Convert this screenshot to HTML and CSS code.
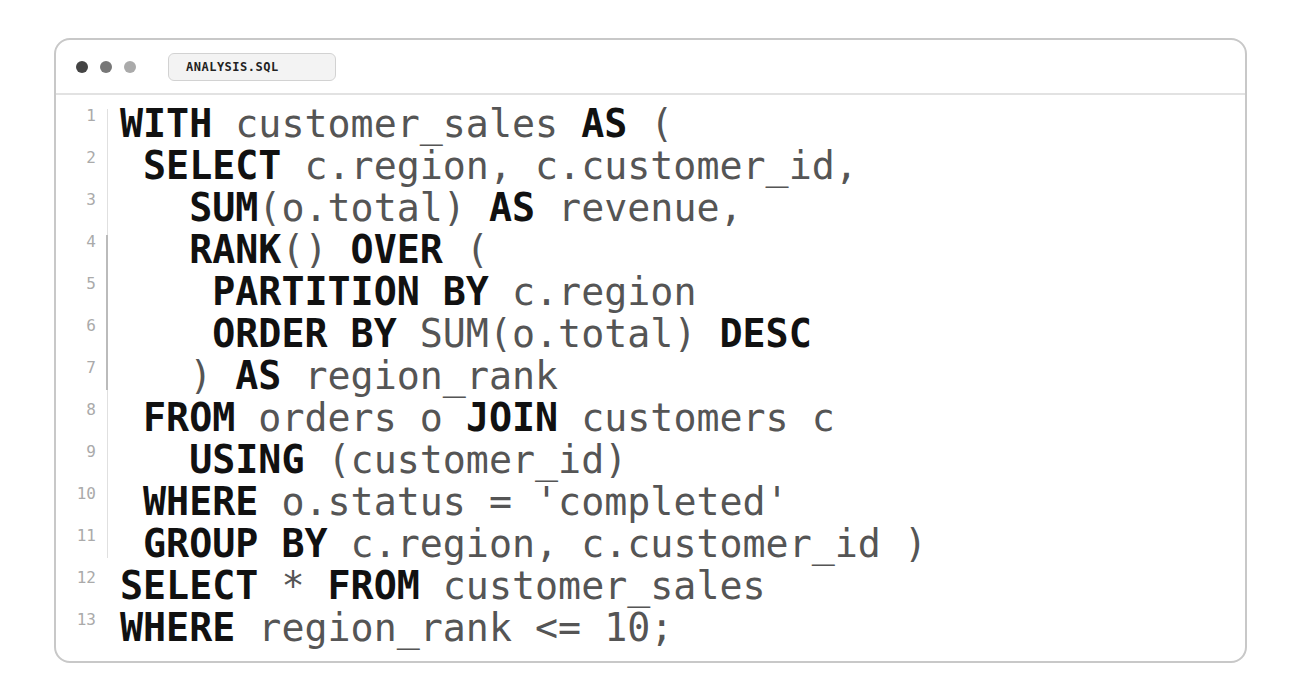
FILE: index.html
```html
<!DOCTYPE html>
<html>
<head>
<meta charset="utf-8">
<link rel="stylesheet" href="styles.css">
</head>
<body>
<div class="window">
  <div class="titlebar">
    <span class="dot d1"></span><span class="dot d2"></span><span class="dot d3"></span>
    <div class="tab">ANALYSIS.SQL</div>
  </div>
  <div class="code">
    <div class="scope">
      <div class="line"><span class="num">1</span><span class="src"><b>WITH</b> customer_sales <b>AS</b> (</span></div>
      <div class="line"><span class="num">2</span><span class="src"> <b>SELECT</b> c.region, c.customer_id,</span></div>
      <div class="line"><span class="num">3</span><span class="src">   <b>SUM</b>(o.total) <b>AS</b> revenue,</span></div>
      <div class="scope inner">
        <div class="line"><span class="num">4</span><span class="src">   <b>RANK</b>() <b>OVER</b> (</span></div>
        <div class="line"><span class="num">5</span><span class="src">    <b>PARTITION BY</b> c.region</span></div>
        <div class="line"><span class="num">6</span><span class="src">    <b>ORDER BY</b> SUM(o.total) <b>DESC</b></span></div>
        <div class="line"><span class="num">7</span><span class="src">   ) <b>AS</b> region_rank</span></div>
      </div>
      <div class="line"><span class="num">8</span><span class="src"> <b>FROM</b> orders o <b>JOIN</b> customers c</span></div>
      <div class="line"><span class="num">9</span><span class="src">   <b>USING</b> (customer_id)</span></div>
      <div class="line"><span class="num">10</span><span class="src"> <b>WHERE</b> o.status = 'completed'</span></div>
      <div class="line"><span class="num">11</span><span class="src"> <b>GROUP BY</b> c.region, c.customer_id )</span></div>
    </div>
    <div class="line"><span class="num">12</span><span class="src"><b>SELECT</b> * <b>FROM</b> customer_sales</span></div>
    <div class="line"><span class="num">13</span><span class="src"><b>WHERE</b> region_rank &lt;= 10;</span></div>
  </div>
</div>
</body>
</html>
```
FILE: styles.css
```css
html, body {
  margin: 0;
  padding: 0;
  background: #ffffff;
}
body {
  padding-top: 38px;
  font-family: "DejaVu Sans Mono", monospace;
}
.window {
  margin-left: 54px;
  width: 1189px;
  height: 621px;
  border: 2px solid #c8c8c8;
  border-radius: 16px;
  background: #fff;
  overflow: hidden;
}
.titlebar {
  height: 53px;
  border-bottom: 2px solid #e2e2e2;
  display: flex;
  align-items: center;
  padding-left: 20px;
}
.dot {
  width: 12px;
  height: 12px;
  border-radius: 50%;
  margin-right: 12px;
}
.d1 { background: #444; }
.d2 { background: #777; }
.d3 { background: #aaa; margin-right: 32px; }
.tab {
  width: 149px;
  height: 26px;
  border: 1px solid #d2d2d2;
  border-radius: 6px;
  background: #f3f3f3;
  padding-left: 17px;
  box-sizing: content-box;
  font-size: 12px;
  font-weight: bold;
  letter-spacing: 0.5px;
  color: #222;
  line-height: 26px;
}
.code {
  padding-top: 8px;
}
.scope {
  position: relative;
}
.scope::before {
  content: "";
  position: absolute;
  left: 51px;
  top: 6px;
  bottom: 7px;
  width: 1px;
  background: #e0e0e0;
}
.scope.inner::before {
  left: 50px;
  width: 2px;
  background: #bbbbbb;
}
.line {
  display: flex;
  height: 42px;
}
.num {
  width: 40px;
  flex: none;
  text-align: right;
  font-size: 16px;
  line-height: 16px;
  padding-top: 5px;
  color: #aaaaaa;
}
.src {
  margin-left: 24px;
  white-space: pre;
  font-size: 38.3px;
  line-height: 42px;
  color: #555555;
}
.src b {
  font-weight: bold;
  color: #111111;
}
```
